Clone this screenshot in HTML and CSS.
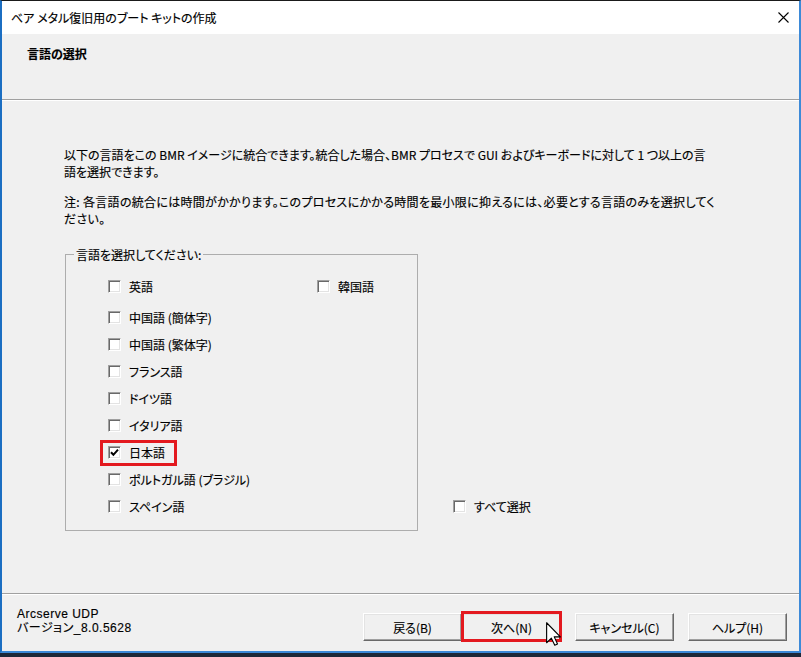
FILE: index.html
```html
<!DOCTYPE html>
<html lang="ja">
<head>
<meta charset="utf-8">
<title>ベア メタル復旧用のブート キットの作成</title>
<link rel="stylesheet" href="styles.css">
</head>
<body>
<div class="window">
  <div class="titlebar">
    <span class="title">ベア メタル復旧用のブート キットの作成</span>
    <svg class="close" width="11" height="11" viewBox="0 0 11 11"><path d="M0.5 0.5L10.5 10.5M10.5 0.5L0.5 10.5" stroke="#000" stroke-width="1.1" fill="none"/></svg>
  </div>
  <div class="header"><h1 class="header-title">言語の選択</h1></div>
  <div class="content">
    <p class="desc">以下の言語をこの BMR イメージに統合できます。統合した場合、BMR プロセスで GUI およびキーボードに対して 1 つ以上の言<br>語を選択できます。</p>
    <p class="desc note">注: 各言語の統合には時間がかかります。このプロセスにかかる時間を最小限に抑えるには、必要とする言語のみを選択してく<br>ださい。</p>
    <div class="group-row">
      <fieldset class="group">
        <legend>言語を選択してください:</legend>
        <div class="rows">
          <div class="row first">
            <label class="check col-left"><span class="box"></span>英語</label>
            <label class="check"><span class="box"></span>韓国語</label>
          </div>
          <div class="row"><label class="check"><span class="box"></span>中国語 (簡体字)</label></div>
          <div class="row"><label class="check"><span class="box"></span>中国語 (繁体字)</label></div>
          <div class="row"><label class="check"><span class="box"></span>フランス語</label></div>
          <div class="row"><label class="check"><span class="box"></span>ドイツ語</label></div>
          <div class="row"><label class="check"><span class="box"></span>イタリア語</label></div>
          <div class="row"><label class="check selected"><span class="box"><svg width="9" height="9" viewBox="0 0 9 9"><path d="M1 4.2L3.4 6.8L8 1.6" stroke="#000" stroke-width="2" fill="none"/></svg></span>日本語</label></div>
          <div class="row"><label class="check"><span class="box"></span>ポルトガル語 (ブラジル)</label></div>
          <div class="row"><label class="check"><span class="box"></span>スペイン語</label></div>
        </div>
      </fieldset>
      <label class="check select-all"><span class="box"></span>すべて選択</label>
    </div>
  </div>
  <div class="footer">
    <div class="product">Arcserve UDP<br>バージョン_8.0.5628</div>
    <div class="buttons">
      <div class="pair">
        <button class="btn">戻る(B)</button>
        <button class="btn next">次へ(N)</button>
      </div>
      <button class="btn">キャンセル(C)</button>
      <button class="btn">ヘルプ(H)</button>
    </div>
  </div>
</div>
<svg class="cursor" width="15" height="24" viewBox="0 0 12 19"><path d="M0.5 0.5L0.5 16.5L4.3 12.8L7 18.5L9.2 17.5L6.6 11.8L11.5 11.8Z" fill="#fff" stroke="#000" stroke-width="0.9" stroke-linejoin="round"/></svg>
</body>
</html>
```
FILE: styles.css
```css
* { box-sizing: border-box; }
html, body { margin: 0; padding: 0; }
body {
  width: 801px;
  height: 657px;
  overflow: hidden;
  position: relative;
  background: #1d2838;
  font-family: "Noto Sans CJK JP", "Noto Sans", sans-serif;
  font-size: 12px;
  color: #000;
  font-feature-settings: "palt";
  -webkit-text-stroke: 0.15px #000;
}
.window {
  width: 801px;
  height: 653px;
  display: flex;
  flex-direction: column;
  background: #f0f0f0;
  border-top: 1px solid #1a1a1a;
  border-left: 2px solid #1b6ec2;
  border-right: 2px solid #3d8ad8;
  border-bottom: 2px solid #3a88d6;
}
.titlebar {
  flex: none;
  height: 33px;
  background: #fff;
  display: flex;
  align-items: center;
  justify-content: space-between;
  padding: 0 10px 0 9px;
  line-height: 17px;
}
.header {
  flex: none;
  height: 66px;
  padding: 11px 25px 0;
  border-bottom: 1px solid #a0a0a0;
}
.header-title {
  margin: 0;
  font-size: 12px;
  font-weight: bold;
  line-height: 17px;
}
.content {
  flex: 1;
  border-top: 1px solid #fff;
  padding: 45px 0 0 62px;
}
.desc { margin: 0; line-height: 17px; }
.note { margin-top: 13px; letter-spacing: 0.3px; }
.group-row {
  display: flex;
  margin: 19px 0 0 1px;
}
.group {
  margin: 0;
  padding: 10px 0 10px 0;
  width: 353px;
  min-width: 0;
  border: 1px solid #adadad;
}
.group legend {
  margin-left: 8px;
  padding: 0 2px;
  line-height: 17px;
}
.rows { padding-left: 42px; }
.row {
  display: flex;
  align-items: center;
  height: 27px;
}
.row.first { margin-bottom: 4px; }
.col-left { width: 209px; }
.check {
  display: flex;
  align-items: center;
  gap: 8px;
  line-height: 17px;
}
.box {
  flex: none;
  width: 13px;
  height: 13px;
  background: #fff;
  border: 1px solid;
  border-color: #a0a0a0 #fff #fff #a0a0a0;
  box-shadow: inset 1px 1px 0 #696969, inset -1px -1px 0 #e3e3e3;
  display: flex;
  align-items: center;
  justify-content: center;
}
.selected {
  position: relative;
  align-self: stretch;
}
.selected::after {
  content: "";
  position: absolute;
  left: -8px;
  right: -12px;
  top: 1px;
  bottom: 0;
  border: 3px solid #e3191f;
}
.select-all {
  align-self: flex-end;
  height: 27px;
  margin: 0 0 11px 35px;
}
.footer {
  flex: none;
  height: 58px;
  display: flex;
  align-items: flex-start;
  padding: 13px 12px 0 15px;
  border-top: 1px solid #a0a0a0;
  box-shadow: inset 0 1px 0 #fff;
}
.product {
  font-family: "Liberation Sans", "Noto Sans CJK JP", sans-serif;
  font-size: 12px;
  line-height: 14px;
  letter-spacing: 0.5px;
}
.buttons {
  margin-left: auto;
  margin-top: 6px;
  display: flex;
  gap: 14px;
}
.pair { display: flex; }
.btn {
  width: 99px;
  height: 28px;
  padding: 0;
  font-family: inherit;
  font-size: 12px;
  color: #000;
  background: #f0f0f0;
  border: 1px solid;
  border-color: #fff #696969 #696969 #fff;
  box-shadow: inset -1px -1px 0 #a0a0a0, inset 1px 1px 0 #e3e3e3;
  font-feature-settings: "palt";
  -webkit-text-stroke: 0.15px #000;
}
.next { position: relative; }
.next::after {
  content: "";
  position: absolute;
  left: -2px;
  right: -2px;
  top: -3px;
  bottom: -2px;
  border: 3px solid #e3191f;
}
.cursor {
  position: absolute;
  left: 546px;
  top: 622px;
}
```
